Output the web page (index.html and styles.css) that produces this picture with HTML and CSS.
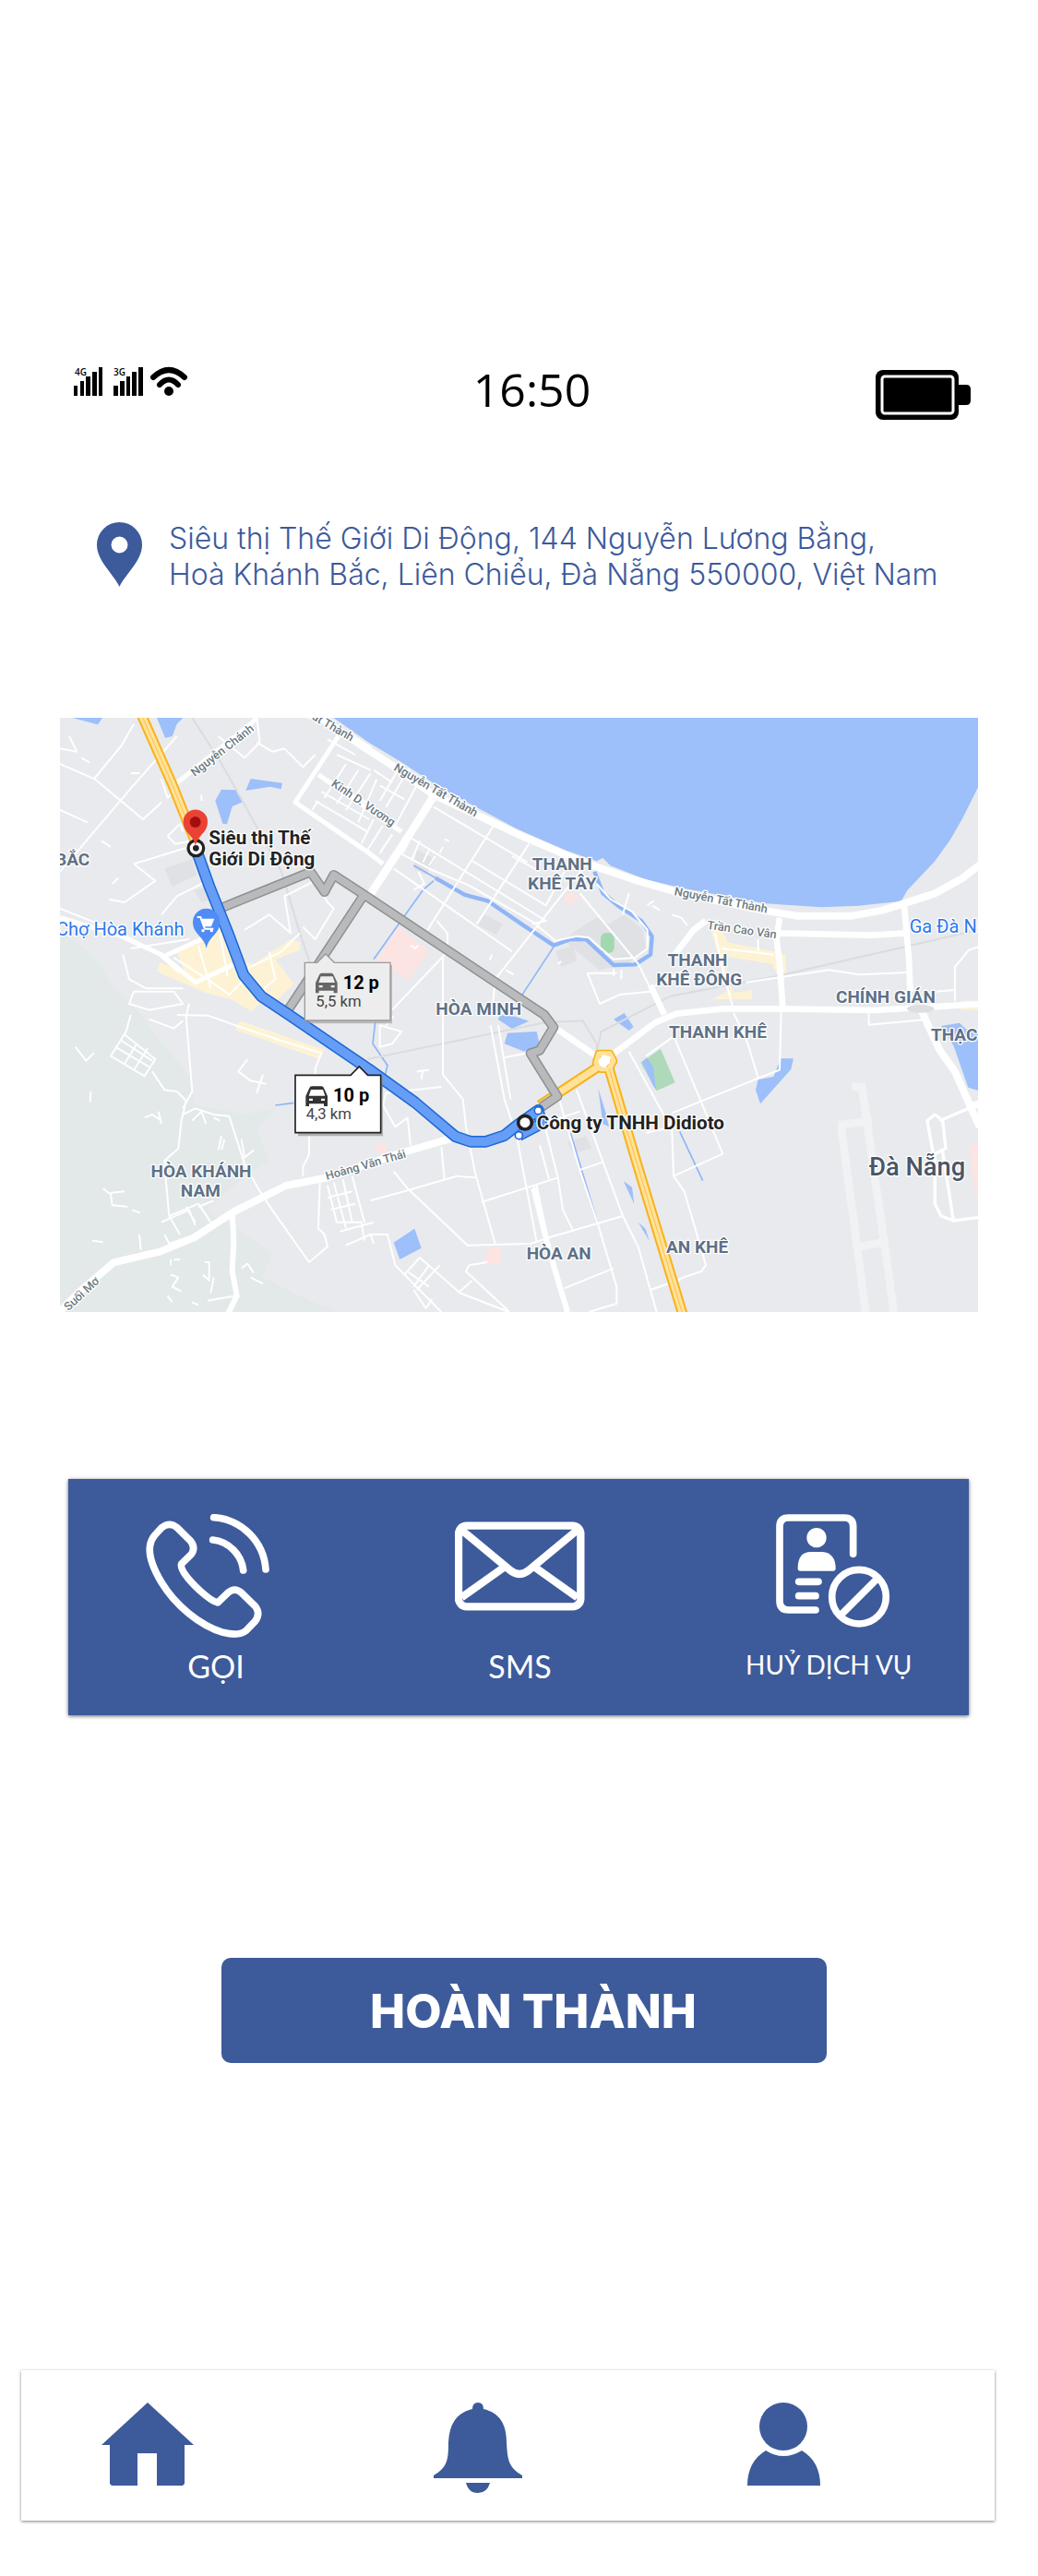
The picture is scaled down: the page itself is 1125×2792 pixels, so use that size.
FILE: index.html
```html
<!DOCTYPE html>
<html lang="vi">
<head>
<meta charset="utf-8">
<meta name="viewport" content="width=device-width, initial-scale=1">
<title>Hoàn thành đơn</title>
<link rel="stylesheet" href="styles.css">
</head>
<body>
<header class="status">
  <svg class="status-signal" width="124" height="32" viewBox="0 0 124 32" role="img" aria-label="4G, 3G, Wi-Fi">
    <path d="M0 20h4v11h-4zM7 15h4v16h-4zM13 10h5v21h-5zM20 5h5v26h-5zM27 0h4v31h-4z"/>
    <path d="M43 20h5v11h-5zM50 15h5v16h-5zM57 10h4v21h-4zM63 5h5v26h-5zM70 0h5v31h-5z"/>
    <text x="1" y="9">4G</text><text x="43" y="9">3G</text>
    <g fill="none" stroke="#000" stroke-width="6" stroke-linecap="round"><path d="M86 11Q103-5 120 11"/><path d="M93 19Q103 8 113 19"/></g>
    <circle cx="103" cy="26" r="5"/>
  </svg>
  <time class="status-time">16:50</time>
  <svg class="status-battery" width="103" height="54" viewBox="0 0 103 54" role="img" aria-label="Pin">
    <rect width="90" height="54" rx="8"/><path d="M88 16h10q5 0 5 5v12q0 5-5 5h-10z"/>
    <rect x="7" y="7" width="77" height="40" rx="3" fill="none" stroke="#fff" stroke-width="3"/>
  </svg>
</header>

<main>
  <address class="place">
    <svg width="49" height="70" viewBox="0 0 49 70" aria-hidden="true"><path fill-rule="evenodd" d="M24.500 70C18 56 0 42 0 24.500a24.500 24.500 0 0 1 49 0C49 42 31 56 24.500 70zM24.500 15.500a9 9 0 1 0 0 18a9 9 0 0 0 0-18z"/></svg>
    <p>Siêu thị Thế Giới Di Động, 144 Nguyễn Lương Bằng,<br>Hoà Khánh Bắc, Liên Chiểu, Đà Nẵng 550000, Việt Nam</p>
  </address>

  <svg class="map" viewBox="0 0 2985 1932" role="img" aria-label="Bản đồ tuyến đường">
    <rect width="2985" height="1932" fill="#e8eaed"/>
    <!-- hills -->
    <path fill="#e2e9e8" d="M0 700Q120 760 160 860L260 960L330 1060L420 1160L440 1260L600 1290L700 1270L640 1340L680 1440L600 1490L480 1600L600 1680L690 1740L660 1820L780 1880L900 1932H0z"/>
    <path fill="#dfe1e4" d="M340 490l90-30 15 50-80 40zM435 560l50-10 10 40-35 10zM1160 430l60 30-30 50-40-20zM1380 640l60 30-20 35-60-30zM1665 700l80-50 40 20 50-30 60 50 10 60-60 50-90 20-110-90zM1610 760l60-20 10 50-50 20zM1650 1380l60-20 20 40-60 15z"/>
    <!-- built-up strips -->
    <g fill="#fdf3d4"><path d="M380 760l140-80 50 110 60 10 120-80 30 10v25l-80 30 60 80-60 60-40-10-35 40-70-40-80-20-160-70 10-30 80 30z"/><path d="M585 985l275 95-15 30-275-95zM2115 690h40l15 40 150 30 40 10v70l-30-10-15-30-160-25 35 120 60-10v30h-130l60-30z"/><path d="M2930 920h55v30h-55z"/></g>
    <g fill="#fce4e2"><path d="M1100 680l100 80-70 95-100-70zM1635 590l25-25 30 15-35 30zM1375 1770l20-48h40l-3 58zM1015 1395l40-20 10 40-15 5zM2955 1385l30-3v175l-10-5z"/></g>
    <!-- water -->
    <g fill="#9dbffa">
      <path d="M890 0L1005 81 1105 141 1235 226 1345 286 1485 361 1645 431 1745 466 1765 456 1790 481 1905 526 2025 554 2295 604 2475 616 2595 611 2735 596 2755 561 2845 466 2895 396 2935 326 2985 226V0z"/>
      <path d="M40 0h98l-15 22zM315 0h85l-20 20-15 40-23 5zM620 198l103 14-4 20-35-8-80 12zM525 233l50 2 20 38-35 15-17 58-14-2-24-75zM2865 1002l60-10 20 20 40 10v190l-32-10-47-135zM2344 1108h41l-8 35-100 112-15-45 8-33 50-10zM1455 1025l95-5 10 45-50 20-65-25zM1430 966l50 5 45 15-55 25-45-30zM1800 980l35-20 30 45-15 12zM1085 1706l68-45 22 63-70 37zM1750 1205l25 80 10 45-20-10zM1832 1506l28 20 7 55zM1880 1640l24 22 12 38z"/>
    </g>
    <g fill="none" stroke="#8fb5f8" stroke-linejoin="round">
      <path stroke-width="13" d="M1738 500L1765 570 1820 615 1890 660 1925 710 1920 770 1870 802 1800 804 1710 720 1660 720 1605 740 1500 670 1390 595 1315 575 1220 520"/>
      <path stroke-width="5" d="M1220 520L1150 480M1215 530L1180 560 1020 785M1605 745L1500 905M1025 990L1017 1060 1065 1130 1040 1230M700 1260L760 1252M1660 1350L1750 1650M2015 1345L2090 1505"/>
    </g>
    <path fill="#aed9bb" d="M1888 1121l65-45 47 110-60 27z"/><path fill="#9dbffa" d="M1893 1118l15-13 20 30 10 75-10-15z"/>
    <rect x="1758" y="699" width="44" height="66" rx="18" fill="#a2d8b0"/>
    <!-- railways -->
    <path fill="none" stroke="#dadcdf" stroke-width="6" d="M430 0L520 140 560 210 720 500 780 700 820 820M1000 1110L1580 990 1700 985 1745 1060V1100M1745 1090L1760 1020 1985 905 2330 840 2985 690"/>
    <!-- runway -->
    <g fill="none" stroke="#f1f2f4" stroke-width="26"><path d="M2575 1200h45M2608 1205L2712 1932M2540 1330L2620 1932M2530 1325L2640 1310M2600 1720L2680 1705"/></g>

    <!-- lanes -->
    <g class="lane">
      <path d="M0 150L115 200 270 330 330 275M0 100L55 110 30 60M380 60L230 230 60 430 0 500M0 300L90 340M110 200L200 90 240 20M330 200L350 260 370 240M515 60L600 130 650 80 640 0M640 80L690 110 730 100 790 160 830 120M350 385L390 345 400 370M350 385L375 410 430 400M240 475L420 420M240 475L310 530 210 600 160 590M330 640L380 580 470 535M0 620L200 700 320 770 390 830"/>
      <path d="M600 690L680 640 750 700 730 580 830 530 870 600 890 620 830 720 790 680M230 750L420 720M205 770L225 850 280 880 400 880M370 780L480 850 550 900 620 830M450 740L490 880M520 700L545 840M600 820L720 760 780 700M640 900L700 850 680 760M225 930L290 950 400 930 370 890 240 890zM420 930L410 970 430 1215 400 1270"/>
      <path d="M230 966L215 1020 165 1100 275 1165 310 1110 210 1030M180 1070L290 1135M200 1050L300 1115M250 1060L210 1125M285 1075L240 1145M300 1150L340 1210 380 1215 410 1245 395 1310 385 1400 340 1440 345 1510 355 1620 390 1680M355 1620L450 1580 490 1640M400 1290L440 1270 500 1290 550 1295 600 1450 650 1540 690 1600 810 1770 870 1720 860 1680 840 1660 845 1510M330 1640L420 1600 440 1650M340 1680L355 1710 440 1680M410 1590L440 1640M450 1590L500 1570"/>
      <path d="M290 980L370 1010 400 985M380 966L480 968 600 1010 720 1050 850 1090 830 1140V1200M810 1360V1420L790 1460V1490M870 1520L900 1640 980 1640 990 1700M890 1510L930 1660M920 1500L950 1640M950 1490L990 1640M870 1560L950 1540M880 1600L960 1580M910 1670L1020 1640M930 1715L1010 1680 1020 1710M50 1070L85 1115 110 1090M100 1215L98 1250M140 1530L165 1550 170 1585 220 1590M165 1545L210 1540M235 1600L260 1610M105 1700L140 1705M258 1680L263 1730M275 1300L300 1290 330 1310M320 1280L330 1320M430 1310L460 1280 475 1320M500 1300L520 1310M525 1360L515 1405M535 1370L525 1405M590 1370L600 1430 630 1405M610 1110L580 1150 620 1180 670 1190M640 1220L660 1160"/>
      <path d="M360 1760v20M370 1762h20M360 1810l25 10-20 30 30 15M470 1770h15v60l-20-20M500 1820l-10 50M590 1790l20-15 20 30M620 1820l40 20M350 1880l15 20M430 1900l20 10M480 1895l85-15M135 400l30 20M170 540l20-20M70 130l25 15M230 180h30M460 270v-20"/>
      <path d="M940 50L1010 95M960 120L870 70M900 120L1010 170M930 150L860 260M970 170L900 280M1010 180L930 300M870 200L1005 280M850 240L1005 330M830 270L1000 370M1030 200L970 340M820 300L840 270M1110 150L1040 270M1135 165L1060 290M1160 220L1090 350M1020 170L1080 210M1040 220L1120 265M1050 350L1000 430M1020 330L980 410M1080 380L1040 440M1140 390L1115 440M1170 400L1145 460M1200 430L1180 470M1220 450L1200 480"/>
      <path d="M1215 290L1520 470M1140 390L1580 660 1535 670M1105 440L1210 495 1330 545 1540 665 1610 725 1680 710 1720 715 1800 785 1870 780 1910 750V690L1860 630 1790 590 1745 540M1085 490L1470 760M1410 350L1195 690M1525 410L1355 670M1700 490L1415 850 1405 960M1640 500L1580 610 1340 465M1470 450L1560 500M1400 1000L1445 1240 1485 1360 1550 1705M1425 1000L1465 1240M1270 750L1080 950M1245 780V1160L1310 1240 1320 1330 1350 1480 1415 1710M1225 660L1260 700V740M1165 500L1185 540 1150 560"/>
      <path d="M1690 570L1880 800 1920 880 1970 960M1850 570L1830 640M1810 830L1715 830 1755 930 1820 900 1920 890M1800 815V840M1825 820V850M2030 820L1920 880M1370 1575L1620 1495M1010 1570L1135 1535 1290 1490 1350 1495M1085 1475L1130 1530 1325 1715 1530 1710 1590 1690 1830 1620M1240 1395L1250 1500M1560 1390L1590 1500M1580 1340L1620 1500 1635 1600 1670 1670M1620 1230L1690 1470 1750 1650 1810 1850V1905L1720 1932M1680 1210L1830 1620 1880 1720 1940 1932M1690 1470L1765 1445M1640 1855L1800 1790M1920 1860L2020 1825M1540 1520L1580 1700M1550 1520L1585 1690M1445 1105L1520 1090"/>
      <path d="M1850 1085L1990 1340 1995 1490 2030 1540 2100 1780 2085 1800 2010 1826M2000 1045L2155 1418 1995 1490M1990 1285L2275 1170 2340 1145 2345 950M1990 1040L1905 1100M2230 1040L2270 1170M2190 960L2230 1040M2630 966V998L2810 982M1905 1350L1990 1330M1600 1310L1690 1280M2270 720V760M2130 700L2150 800 2190 950M2150 750L2320 770M2230 860L2500 820 2600 835 2755 828M2910 920V810L2955 755 2985 745M2850 890L2910 885M2630 940V966M2630 996"/>
      <path d="M1005 1680L1065 1680 1090 1780 1240 1932M1170 1755L1120 1810M1170 1755L1300 1870 1460 1932M1130 1800L1200 1850M1200 1780L1150 1850M1235 1780L1160 1860M1340 1830L1295 1870M1390 1770L1330 1780 1320 1800 1460 1930M1150 1860L1190 1920 1210 1890M1045 1250L1090 1330 1130 1300M1050 1260L1060 1220 1240 1200M1130 1300L1140 1390M1040 1000L1110 1020 1080 1060 1040 1070zM1060 1000L1085 970M1160 1150l40-5M1180 1145l-5 30M1250 395l15 5M1245 420l-10 20M1405 770l-8 18M1450 820l25 15M1140 740l15 10 10-10M1620 800l10-8M1910 610l20-15M1925 610l25 15M1990 640l30 10 20 25"/>
      <path stroke-width="10" d="M2820 1310L2845 1290 2870 1310 2880 1400 2840 1420zM2860 1310L2955 1270M2845 1420V1580L2865 1620 2905 1635 2985 1625M2870 1410L2905 1635"/>
    </g>
    <!-- main streets -->
    <g class="street">
      <path stroke-width="24" d="M830-10L1005 106 1105 171 1215 251 1345 311 1505 386 1705 471 1865 526 2005 566 2285 626 2395 644 2575 644 2675 626 2845 571 2935 521 2990 478"/>
      <path stroke-width="26" d="M1215 255L1130 390 1005 580"/>
      <path stroke-width="15" d="M905 60L765 275 1005 440 1050 475M840 185L1110 370M370 220L620 20 640 0M0 650L200 710 330 770 440 860 570 800M340 775L460 720"/>
      <path stroke-width="24" d="M0 1930L60 1870 175 1771 325 1736 435 1691 565 1606 735 1521 865 1496 1105 1416 1295 1361"/>
      <path stroke-width="18" d="M560 1610L565 1700 560 1800 575 1880 545 1940M1540 1530L1590 1730 1650 1932"/>
      <path stroke-width="20" d="M1615 1011L1745 1101M1790 1100L1935 991 2005 962 2155 946 2335 946 2645 951 2985 931M1920 870L1965 965M2340 650L2330 720 2340 800 2350 940M2335 700L2640 707 2755 700M2745 610L2760 780 2765 890M1995 775L2060 690 2100 660"/>
      <path stroke-width="24" d="M2800 950L2860 1080 2910 1150 2990 1330M2955 1265L2990 1255"/>
    </g>
    <ellipse cx="2798" cy="946" rx="44" ry="13" fill="#dcdee0"/>

    <!-- highway -->
    <g fill="none" stroke-linejoin="round">
      <g stroke="#f9b11c" stroke-width="34"><path d="M265-10L365 216 445 416M1560 1260L1765 1125M1785 1140L1875 1446 2025 1940"/><path stroke-width="26" d="M1752 1092h36l12 24-15 26h-26l-16-20z"/></g>
      <g stroke="#ffe299" stroke-width="22"><path d="M265-10L365 216 445 416M1560 1260L1765 1125M1785 1140L1875 1446 2025 1940"/><path stroke-width="16" d="M1752 1092h36l12 24-15 26h-26l-16-20z"/></g>
      <path stroke="#fbc14a" stroke-width="3" d="M265-10L365 216 445 416M1785 1140L1875 1446 2025 1940"/>
    </g>
    <path d="M1750 1116l14-20 26 6-2 20-16 16-16-6z" fill="#fff"/>

    <!-- routes -->
    <g fill="none" stroke-linejoin="round">
      <g stroke="#8f9092" stroke-width="32"><path d="M530 616L815 501 860 566 890 511 990 576 1575 966 1605 1006 1560 1081 1530 1091 1617 1231 1565 1266M985 581L735 960"/></g>
      <g stroke="#b9babb" stroke-width="23"><path d="M530 616L815 501 860 566 890 511 990 576 1575 966 1605 1006 1560 1081 1530 1091 1617 1231 1565 1266M985 581L735 960"/></g>
      <path stroke="#1b67d3" stroke-width="38" d="M442 426L485 546 545 696 597 836 655 906 745 966 1005 1143 1155 1251 1285 1361 1335 1378 1385 1378 1445 1358 1485 1326 1555 1276 1565 1320 1492 1358"/>
      <path stroke="#669df6" stroke-width="29" d="M442 426L485 546 545 696 597 836 655 906 745 966 1005 1143 1155 1251 1285 1361 1335 1378 1385 1378 1445 1358 1485 1326 1555 1276 1565 1320 1492 1358"/>
    </g>
    <g fill="#fff" stroke="#1b67d3" stroke-width="5"><circle cx="1555" cy="1277" r="12"/><circle cx="1492" cy="1358" r="12"/></g>
    <circle cx="1512" cy="1316" r="22" fill="#fff" stroke="#222" stroke-width="11"/>
    <circle cx="442" cy="424" r="25" fill="#fff" stroke="#222" stroke-width="10"/><circle cx="442" cy="424" r="10" fill="#222"/>
    <path fill="#ea4335" d="M441 418C436 380 401 376 401 338a39 39 0 0 1 79 0C480 376 446 380 441 418z"/><circle cx="440" cy="339" r="18" fill="#a50e0e"/>
    <path fill="#4f8cf5" d="M476 750C470 710 432 706 432 664a44 44 0 0 1 88 0C520 706 482 710 476 750z"/>
    <path fill="none" stroke="#fff" stroke-width="6" d="M446 648h11l14 38h28"/><path fill="#fff" d="M456 653h46l-10 26h-27z"/><circle cx="465" cy="692" r="5" fill="#fff"/><circle cx="493" cy="692" r="5" fill="#fff"/>

    <!-- labels -->
    <g class="label label-area">
      <text x="-15" y="481">BẮC</text><text x="1633" y="495" text-anchor="middle">THANH</text><text x="1633" y="558" text-anchor="middle">KHÊ TÂY</text>
      <text x="2073" y="807" text-anchor="middle">THANH</text><text x="2078" y="870" text-anchor="middle">KHÊ ĐÔNG</text>
      <text x="1222" y="967">HÒA MINH</text><text x="2523" y="927">CHÍNH GIÁN</text><text x="1980" y="1040">THANH KHÊ</text><text x="2832" y="1050">THẠC</text>
      <text x="459" y="1494" text-anchor="middle">HÒA KHÁNH</text><text x="457" y="1557" text-anchor="middle">NAM</text><text x="1517" y="1762">HÒA AN</text><text x="1971" y="1740">AN KHÊ</text>
    </g>
    <text class="label label-city" x="2630" y="1489">Đà Nẵng</text>
    <g class="label label-shop"><text x="-12" y="708">Chợ Hòa Khánh</text><text x="2762" y="698">Ga Đà Nẵng</text></g>
    <g class="label label-street">
      <text transform="translate(438 192) rotate(-38)">Nguyễn Chánh</text><text transform="translate(680 -76) rotate(30)">Nguyễn Tất Thành</text>
      <text transform="translate(880 220) rotate(34)">Kinh D. Vương</text><text transform="translate(1083 169) rotate(30)">Nguyễn Tất Thành</text>
      <text transform="translate(1996 576) rotate(11)">Nguyễn Tất Thành</text><text transform="translate(2103 686) rotate(8)">Trần Cao Vân</text>
      <text transform="translate(868 1503) rotate(-16)">Hoàng Văn Thái</text><text transform="translate(28 1930) rotate(-43)">Suối Mơ</text>
    </g>
    <g class="label label-stop"><text x="484" y="410">Siêu thị Thế</text><text x="484" y="481">Giới Di Động</text><text x="1550" y="1338">Công ty TNHH Didioto</text></g>

    <!-- route time bubbles -->
    <g>
      <path fill="#9a9a9a" opacity=".6" d="M804 804h276v190h-276z"/>
      <path fill="#ededed" stroke="#9a9a9a" stroke-width="4" d="M796 796h40l28-28 28 28h182v188h-278z"/>
      <path fill="#666" fill-rule="evenodd" d="M843 836q2-6 8-6h31q6 0 8 6l12 26v33h-12v-8h-48v8h-11v-33zM848 841l-7 20h53l-7-20zM842 870h12v7h-12zM881 870h12v7h-12z"/>
      <text class="eta" x="920" y="881">12 p</text><text class="distance" x="832" y="938">5,5 km</text>
    </g>
    <g>
      <path fill="#888" opacity=".6" d="M774 1170h276v190h-276z"/>
      <path fill="#fff" stroke="#222" stroke-width="5" d="M765 1162h180l28-28 28 28h42v187h-278z"/>
      <path fill="#333" fill-rule="evenodd" d="M811 1204q2-6 8-6h31q6 0 8 6l12 26v33h-12v-8h-48v8h-11v-33zM816 1209l-7 20h53l-7-20zM810 1238h12v7h-12zM849 1238h12v7h-12z"/>
      <text class="eta" x="888" y="1249">10 p</text><text class="distance" x="800" y="1305">4,3 km</text>
    </g>
  </svg>

  <div class="actions">
    <button type="button" class="action">
      <svg width="152" height="134" viewBox="294 153 456 402" aria-hidden="true"><g fill="none" stroke="#fff" stroke-width="23" stroke-linecap="round" stroke-linejoin="round"><path d="M346 197Q371 177 396 197L440 241Q458 264 440 286L410 315Q402 338 470 402Q510 438 528 441L562 408Q583 391 604 408L650 453Q668 476 650 501L620 532Q597 551 545 538C470 515 390 450 345 375Q300 300 308 255Q311 236 323 222Z"/><path d="M515 164A182 182 0 0 1 684 333M512 237A112 112 0 0 1 611 336"/></g></svg>
      <span>GỌI</span>
    </button>
    <button type="button" class="action">
      <svg width="141" height="134" viewBox="1300 153 423 402" aria-hidden="true"><g fill="none" stroke="#fff" stroke-width="25" stroke-linejoin="round"><rect x="1312" y="191" width="397" height="263" rx="26"/><path d="M1322 205L1480 336Q1510 360 1540 336L1698 205M1322 424L1460 326M1698 424L1560 326"/></g></svg>
      <span>SMS</span>
    </button>
    <button type="button" class="action action-cancel">
      <svg width="179" height="134" viewBox="744 153 537 402" aria-hidden="true"><g fill="none" stroke="#fff" stroke-width="23" stroke-linecap="round"><path d="M1091 283V194Q1091 165 1062 165H881Q852 165 852 194V435Q852 465 881 465H969M914 373H978M914 419H969"/><circle cx="1110" cy="422" r="88"/><path stroke-linecap="butt" d="M1050 482L1170 362"/></g><g fill="#fff"><circle cx="972" cy="230" r="32"/><path d="M911 330Q911 276 953 276H991Q1034 280 1034 330Q1034 338 1026 338H919Q911 338 911 330z"/></g></svg>
      <span>HUỶ DỊCH VỤ</span>
    </button>
  </div>

  <button type="button" class="finish">HOÀN THÀNH</button>
</main>

<nav class="tabs" aria-label="Điều hướng">
  <a href="#home" aria-label="Trang chủ"><svg width="100" height="90" viewBox="0 0 100 90"><path d="M50 0L100 46H90V88L88 90H60V55H39V90H11L9 88V46H0z"/></svg></a>
  <a href="#notifications" aria-label="Thông báo"><svg width="96" height="98" viewBox="0 0 96 98"><path d="M42 7Q42 0 48 0T54 7C71 11 79 23 79 43C80 62 81 70 96 79V82H0V79C15 70 16 62 16 43C17 23 25 11 42 7zM35 87H61Q58 98 48 98T35 87z"/></svg></a>
  <a href="#profile" aria-label="Tài khoản"><svg width="79" height="90" viewBox="0 0 79 90"><circle cx="39" cy="26" r="26"/><path d="M0 90Q0 64 20 52Q39 64 59 52Q79 64 79 90z"/></svg></a>
</nav>
</body>
</html>
```
FILE: styles.css
```css
* { box-sizing: border-box; }

body {
  margin: 0;
  padding: 398px 0 60px;
  background: #fff;
  color: #3d5a9b;
  font-family: Lato, Inter, "Noto Sans", sans-serif;
}

svg { display: block; }
p { margin: 0; }
button { border: 0; font: inherit; color: #fff; background: none; cursor: pointer; }

.status {
  display: flex;
  justify-content: space-between;
  align-items: flex-start;
  height: 58px;
  padding: 0 73px 0 80px;
  color: #000;
}
.status-signal { overflow: visible; font: 600 10px "Open Sans", sans-serif; }
.status-time { font: 400 50px/48px "Open Sans", sans-serif; }
.status-battery { margin-top: 3px; }

.place {
  display: flex;
  gap: 29px;
  margin-top: 108px;
  padding-left: 105px;
  fill: #3d5a9b;
  font: 300 32px/39px Inter, sans-serif;
}
.place svg { margin-top: 2px; }

.map {
  width: auto;
  margin: 136px 65px 0;
}
.label { paint-order: stroke; stroke: #fff; stroke-width: 8px; stroke-linejoin: round; font-family: Roboto, sans-serif; }
.label-area { fill: #5f7186; font-size: 57px; font-weight: 700; }
.label-city { fill: #4b5566; font-size: 82px; font-weight: 500; }
.label-shop { fill: #2f78ec; font-size: 60px; font-weight: 400; }
.label-street { fill: #6c7a82; font-size: 38px; font-weight: 500; }
.label-stop { fill: #222; font-size: 62px; font-weight: 700; }
.lane { fill: none; stroke: #fff; stroke-width: 6px; stroke-linejoin: round; }
.street { fill: none; stroke: #fff; stroke-linejoin: round; }
.eta { font: 700 60px Roboto, sans-serif; }
.distance { font: 400 50px Roboto, sans-serif; fill: #444; }

.actions {
  display: grid;
  grid-template-columns: 335fr 315fr 242fr;
  justify-items: start;
  margin: 181px 75px 0 74px;
  padding: 38px 0 32px 84px;
  background: #3d5a9b;
  box-shadow: 0 1px 4px rgb(0 0 0 / 60%);
}
.action {
  display: flex;
  flex-direction: column;
  align-items: center;
  gap: 10px;
  padding: 0;
  font-size: 34px;
  line-height: 42px;
  white-space: nowrap;
}
.action-cancel { gap: 8px; font-size: 28px; }

.finish {
  display: block;
  width: calc(100% - 469px);
  margin: 263px 229px 0 240px;
  padding: 28px 0 26px 20px;
  border-radius: 10px;
  background: #3d5a9b;
  font: 800 51px/60px Inter, sans-serif;
}

.tabs {
  display: grid;
  grid-template-columns: 360fr 340fr 268fr;
  justify-items: start;
  margin: 333px 47px 0 23px;
  padding: 35px 0 30px 87px;
  background: #fff;
  fill: #3d5a9b;
  box-shadow: 0 1px 3px rgb(0 0 0 / 50%);
}
```
